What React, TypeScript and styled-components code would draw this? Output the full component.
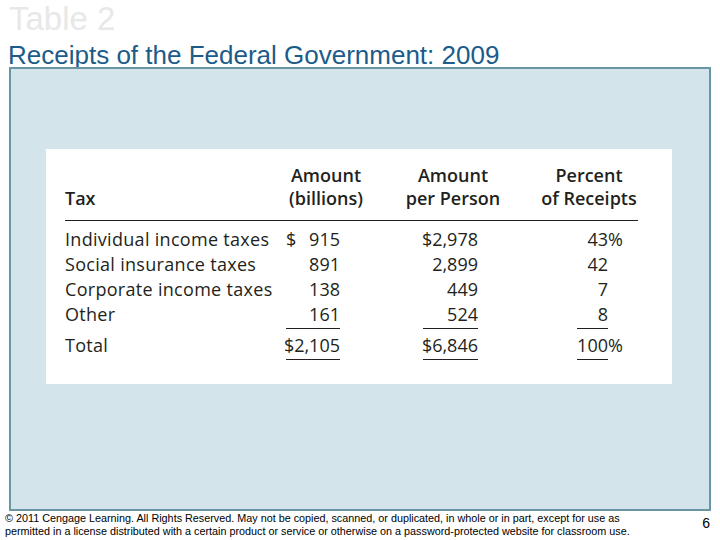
import React from "react";
import styled, { createGlobalStyle, css } from "styled-components";

const Global = createGlobalStyle`
  html, body { margin: 0; padding: 0; background: #ffffff; }
  body {
    width: 720px;
    height: 540px;
    overflow: hidden;
    font-family: "Liberation Sans", Arial, sans-serif;
  }
`;

const Page = styled.div`
  width: 720px;
  height: 540px;
  padding-top: 2px;
  box-sizing: border-box;
  display: flex;
  flex-direction: column;
`;

const SlideNumberTitle = styled.div`
  margin-left: 9px;
  font-size: 33px;
  line-height: 33px;
  color: #e8e8e8;
`;

const Subtitle = styled.h1`
  margin: 8px 0 0 8px;
  font-weight: normal;
  font-size: 26px;
  line-height: 24px;
  color: #1c5c8a;
`;

const Panel = styled.div`
  margin-left: 9px;
  width: 702px;
  height: 444px;
  box-sizing: border-box;
  border: 2px solid #6a95a4;
  background: #d3e4eb;
  padding: 80px 0 0 35px;
`;

const Card = styled.div`
  width: 626px;
  height: 235px;
  box-sizing: border-box;
  background: #ffffff;
  padding: 14.5px 0 0 19px;
  font-family: "Open Sans", "Noto Sans", sans-serif;
  color: #231f20;
`;

const columns = css`
  display: grid;
  grid-template-columns: 221px 80px 174px 98px;
  width: 573px;
`;

const HeaderGrid = styled.div`
  ${columns}
  border-bottom: 1.5px solid #231f20;
`;

const HeadCell = styled.div<{ $center?: boolean }>`
  align-self: end;
  font-weight: 600;
  font-size: 18px;
  line-height: 23px;
  text-align: ${(p) => (p.$center ? "center" : "left")};
  padding-bottom: 10px;
`;

const BodyGrid = styled.div`
  ${columns}
  padding-top: 6.5px;
  font-size: 18px;
  line-height: 25px;
`;

const LabelCell = styled.div<{ $total?: boolean }>`
  padding-top: ${(p) => (p.$total ? "6px" : "0")};
  letter-spacing: 0.3px;
  white-space: nowrap;
`;

const ValueCell = styled.div<{ $offset: number }>`
  display: flex;
  align-items: flex-start;
  margin-left: ${(p) => p.$offset}px;
`;

const NumBox = styled.div<{ $width: number; $total?: boolean; $split?: boolean }>`
  display: flex;
  justify-content: ${(p) => (p.$split ? "space-between" : "flex-end")};
  width: ${(p) => p.$width}px;
  white-space: nowrap;
  ${(p) =>
    p.$total &&
    css`
      margin-top: 1px;
      padding: 4px 0 1px;
      border-top: 1px solid #231f20;
      border-bottom: 1px solid #231f20;
    `}
`;

const Suffix = styled.span<{ $total?: boolean }>`
  width: 16px;
  text-align: left;
  padding-top: ${(p) => (p.$total ? "6px" : "0")};
`;

const Footer = styled.div`
  display: flex;
  justify-content: space-between;
  align-items: flex-start;
  padding: 1px 10px 0 5px;
`;

const Legal = styled.p`
  margin: 0;
  font-size: 10.8px;
  line-height: 13px;
  color: #000000;
`;

const PageNum = styled.span`
  font-size: 14px;
  line-height: 14px;
  margin-top: 4px;
  color: #000000;
`;

type Row = {
  label: string;
  billions: string;
  dollar?: boolean;
  perPerson: string;
  pct: string;
  pctSign?: boolean;
  total?: boolean;
};

const rows: Row[] = [
  { label: "Individual income taxes", billions: "915", dollar: true, perPerson: "$2,978", pct: "43", pctSign: true },
  { label: "Social insurance taxes", billions: "891", perPerson: "2,899", pct: "42" },
  { label: "Corporate income taxes", billions: "138", perPerson: "449", pct: "7" },
  { label: "Other", billions: "161", perPerson: "524", pct: "8" },
  { label: "Total", billions: "$2,105", perPerson: "$6,846", pct: "100", pctSign: true, total: true },
];

export default function App() {
  return (
    <Page>
      <Global />
      <SlideNumberTitle>Table 2</SlideNumberTitle>
      <Subtitle>Receipts of the Federal Government: 2009</Subtitle>
      <Panel>
        <Card>
          <HeaderGrid>
            <HeadCell>Tax</HeadCell>
            <HeadCell $center>
              Amount
              <br />
              (billions)
            </HeadCell>
            <HeadCell $center>
              Amount
              <br />
              per Person
            </HeadCell>
            <HeadCell $center>
              Percent
              <br />
              of Receipts
            </HeadCell>
          </HeaderGrid>
          <BodyGrid>
            {rows.map((r) => (
              <React.Fragment key={r.label}>
                <LabelCell $total={r.total}>{r.label}</LabelCell>
                <ValueCell $offset={0}>
                  <NumBox $width={54} $total={r.total} $split={r.dollar}>
                    {r.dollar && <span>$</span>}
                    <span>{r.billions}</span>
                  </NumBox>
                </ValueCell>
                <ValueCell $offset={57}>
                  <NumBox $width={55} $total={r.total}>
                    <span>{r.perPerson}</span>
                  </NumBox>
                </ValueCell>
                <ValueCell $offset={37}>
                  <NumBox $width={31} $total={r.total}>
                    <span>{r.pct}</span>
                  </NumBox>
                  <Suffix $total={r.total}>{r.pctSign ? "%" : ""}</Suffix>
                </ValueCell>
              </React.Fragment>
            ))}
          </BodyGrid>
        </Card>
      </Panel>
      <Footer>
        <Legal>
          © 2011 Cengage Learning. All Rights Reserved. May not be copied, scanned, or duplicated, in whole or in part, except for use as
          <br />
          permitted in a license distributed with a certain product or service or otherwise on a password-protected website for classroom use.
        </Legal>
        <PageNum>6</PageNum>
      </Footer>
    </Page>
  );
}
